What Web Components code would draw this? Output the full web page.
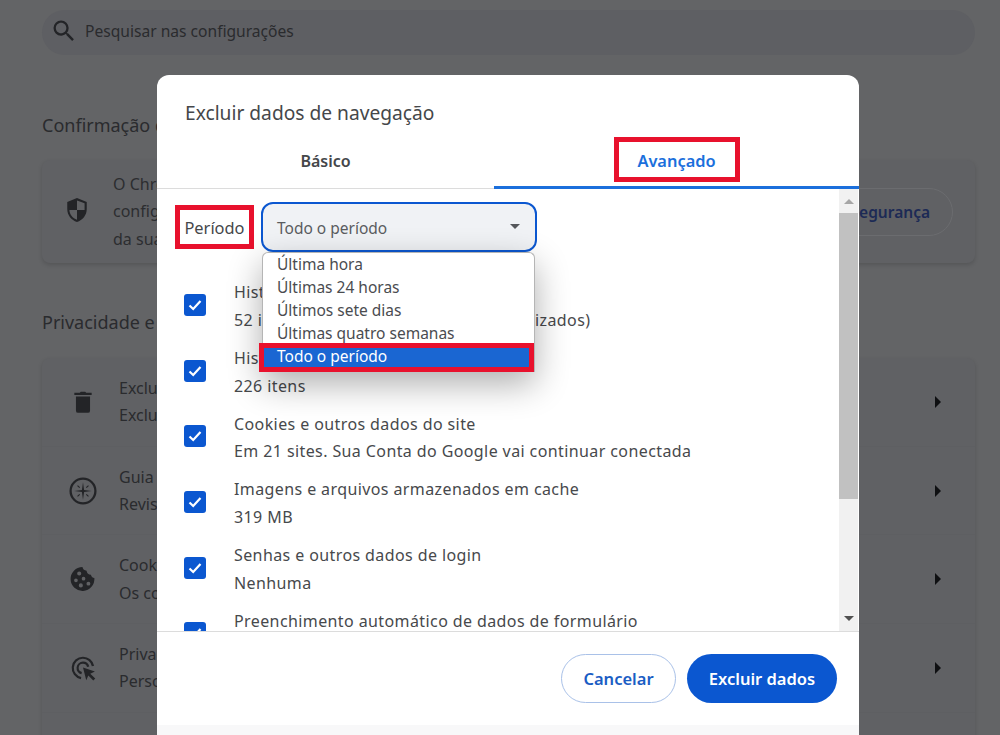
<!DOCTYPE html>
<html lang="pt-BR">
<head>
<meta charset="utf-8">
<title>Excluir dados de navegação</title>
<style>
  html, body { margin: 0; height: 100%; overflow: hidden; background: #636466; }
  body { font-family: "Noto Sans", "Open Sans", sans-serif; }
</style>
</head>
<body>
<settings-page>
  <search-bar>Pesquisar nas configurações</search-bar>

  <settings-section heading="Confirmação de segurança" gap="105" pad="23">
    <safety-card>
      <span>O Chrome</span><span>configurações</span><span>da sua</span>
    </safety-card>
  </settings-section>

  <settings-section heading="Privacidade e segurança" gap="95" pad="24">
    <settings-row icon="trash" title="Excluir dados" sub="Excluir histórico"></settings-row>
    <settings-row icon="compass" title="Guia de privacidade" sub="Revise os controles"></settings-row>
    <settings-row icon="cookie" title="Cookies de terceiros" sub="Os cookies"></settings-row>
    <settings-row icon="ads" title="Privacidade" sub="Personalize"></settings-row>
  </settings-section>
</settings-page>

<clear-dialog heading="Excluir dados de navegação">
  <period-select label="Período" value="Todo o período"></period-select>
  <data-row title="Histórico de navegação" sub="52 itens (nos seus dispositivos sincronizados)"></data-row>
  <data-row title="Histórico de downloads" sub="226 itens"></data-row>
  <data-row title="Cookies e outros dados do site" sub="Em 21 sites. Sua Conta do Google vai continuar conectada"></data-row>
  <data-row title="Imagens e arquivos armazenados em cache" sub="319 MB"></data-row>
  <data-row title="Senhas e outros dados de login" sub="Nenhuma"></data-row>
  <data-row title="Preenchimento automático de dados de formulário"></data-row>
</clear-dialog>

<script>
const ICONS = {
  trash: '<path d="M5.500 7h13v13a2 2 0 0 1-2 2h-9a2 2 0 0 1-2-2zM4 3.500h5L10 2.500h4l1 1h5V5.500H4z"/>',
  compass: '<path fill-rule="evenodd" d="M12 -.5a12.500 12.500 0 1 1 0 25a12.500 12.500 0 0 1 0-25zm0 2.100a10.400 10.400 0 1 0 0 20.800a10.400 10.400 0 0 0 0-20.800z"/><path d="M12 4l1 7 7 1-7 1-1 7-1-7-7-1 7-1z"/><path d="M7.300 6.600l2 2-.7.700-2-2zM16.700 6.600l.7.700-2 2-.7-.7zM7.300 17.400l-.7-.7 2-2 .7.700zM16.700 17.400l-2-2 .7-.7 2 2z"/>',
  cookie: '<path fill-rule="evenodd" d="M11.500 1c.4 2.300 1.800 3.300 3.800 3.300.3 2.300 1.800 3.700 4 3.700.4 1.800 1.400 2.800 3.200 3.100A11 11 0 1 1 11.500 1zM8.500 5a1.900 1.900 0 1 0 0 3.800a1.900 1.900 0 0 0 0-3.800zM5.500 11.500a1.700 1.700 0 1 0 0 3.400a1.700 1.700 0 0 0 0-3.400zm7-1.500a1.700 1.700 0 1 0 0 3.400a1.700 1.700 0 0 0 0-3.400zM10 16a1.900 1.900 0 1 0 0 3.800a1.900 1.900 0 0 0 0-3.800zm7-1.500a1.800 1.800 0 1 0 0 3.600a1.800 1.800 0 0 0 0-3.600z"/>',
  ads: '<path d="M12 1.500a10.500 10.500 0 0 1 10.300 8.500l-2.100.4A8.400 8.400 0 1 0 10.400 20.200l-.4 2.100A10.500 10.500 0 0 1 12 1.500z"/><path d="M12 6a6 6 0 0 1 5.800 4.500l-2.100.5A3.900 3.900 0 1 0 11 15.700l-.5 2.100A6 6 0 0 1 12 6z"/><path d="M12 11.500l11 3.800-4.300 1.900 4.600 4.600-1.800 1.800-4.600-4.600-1.900 4.300z"/>'
};

class SettingsPage extends HTMLElement {
  connectedCallback() {
    if (this.shadowRoot) return;
    this.attachShadow({ mode: 'open' });
    this.shadowRoot.innerHTML = `
      <style>
        :host {
          display: flex;
          flex-direction: column;
          height: 735px;
          box-sizing: border-box;
          padding: 10px 25px 0 42px;
          overflow: hidden;
          background: #636466;
          color: #26272a;
        }
      </style>
      <slot></slot>
    `;
  }
}

class SearchBar extends HTMLElement {
  connectedCallback() {
    if (this.shadowRoot) return;
    this.attachShadow({ mode: 'open' });
    this.shadowRoot.innerHTML = `
      <style>
        :host {
          display: flex;
          align-items: center;
          gap: 7px;
          height: 45px;
          flex: none;
          box-sizing: border-box;
          padding: 0 0 3px 8px;
          border-radius: 23px;
          background: #5e5f63;
          font-size: 15.600px;
          color: #2a2b2e;
        }
        svg { width: 28px; height: 28px; fill: #232427; }
      </style>
      <svg viewBox="0 0 24 24"><path d="M15.500 14h-.79l-.28-.27A6.471 6.471 0 0 0 16 9.500 6.500 6.500 0 1 0 9.500 16c1.610 0 3.090-.59 4.230-1.570l.27.28v.79l5 4.990L20.490 19l-4.990-5zm-6 0C7.010 14 5 11.990 5 9.500S7.010 5 9.500 5 14 7.010 14 9.500 11.990 14 9.500 14z"/></svg>
      <slot></slot>
    `;
  }
}

class SettingsSection extends HTMLElement {
  connectedCallback() {
    if (this.shadowRoot) return;
    this.attachShadow({ mode: 'open' });
    this.shadowRoot.innerHTML = `
      <style>
        :host { display: block; flex: none; }
        h2 {
          margin: 0;
          height: ${this.getAttribute('gap')}px;
          display: flex;
          align-items: flex-end;
          box-sizing: border-box;
          padding-bottom: ${this.getAttribute('pad')}px;
          font-size: 18px;
          font-weight: 400;
          color: #2a2b2e;
        }
        .card {
          border-radius: 8px;
          background: #606164;
          box-shadow: 0 2px 4px rgba(0,0,0,.15);
        }
        .card.rows { padding-bottom: 60px; }
      </style>
      <h2>${this.getAttribute('heading')}</h2>
      <div class="card"><slot></slot></div>
    `;
    if (this.querySelector('settings-row')) this.shadowRoot.querySelector('.card').classList.add('rows');
  }
}

class SafetyCard extends HTMLElement {
  connectedCallback() {
    if (this.shadowRoot) return;
    this.attachShadow({ mode: 'open' });
    this.shadowRoot.innerHTML = `
      <style>
        :host {
          display: flex;
          align-items: center;
          height: 103px;
          padding: 0 22px 0 22px;
          font-size: 16px;
          line-height: 27.500px;
          color: #2c2d30;
        }
        svg { width: 26px; height: 26px; fill: #232427; flex: none; margin-top: -3px; }
        .text { display: flex; flex-direction: column; margin-left: 23px; margin-top: 1px; }
        ::slotted(span) { display: block; }
        button {
          margin-left: auto;
          height: 48px;
          padding: 0 22px 0 24px;
          border: 1px solid #6b6c6f;
          border-radius: 24px;
          background: transparent;
          font: 600 15.500px "Noto Sans", sans-serif;
          color: #1c2a55;
        }
      </style>
      <svg viewBox="0 0 24 24"><path fill-rule="evenodd" d="M12 1l9 3.500v6.500c0 5.700-3.800 10.300-9 12-5.200-1.700-9-6.300-9-12V4.500zM12 3.200V12H5c.2 4.200 3 7.500 7 9V12h7V5.800z"/></svg>
      <div class="text"><slot></slot></div>
      <button>Segurança</button>
    `;
  }
}

class SettingsRow extends HTMLElement {
  connectedCallback() {
    if (this.shadowRoot) return;
    this.attachShadow({ mode: 'open' });
    this.shadowRoot.innerHTML = `
      <style>
        :host {
          display: flex;
          align-items: center;
          height: 88.700px;
          padding: 0 34px 0 28px;
          box-sizing: border-box;
          font-size: 16px;
          color: #2a2b2e;
          border-bottom: 1px solid #5e5f62;
        }
        svg.icon { width: 26px; height: 26px; fill: #232427; flex: none; overflow: visible; }
        .text { margin-left: 23px; padding-top: 1px; line-height: 27.500px; }
        .arrow { margin-left: auto; width: 0; height: 0; border-left: 6px solid #0f1012; border-top: 6px solid transparent; border-bottom: 6px solid transparent; }
      </style>
      <svg class="icon" viewBox="0 0 24 24">${ICONS[this.getAttribute('icon')]}</svg>
      <div class="text"><div>${this.getAttribute('title')}</div><div>${this.getAttribute('sub')}</div></div>
      <span class="arrow"></span>
    `;
  }
}

class ClearDialog extends HTMLElement {
  connectedCallback() {
    if (this.shadowRoot) return;
    this.attachShadow({ mode: 'open' });
    this.shadowRoot.innerHTML = `
      <style>
        :host {
          position: absolute;
          left: 157px;
          top: 75px;
          width: 702px;
          height: 660px;
          display: flex;
          flex-direction: column;
          border-radius: 12px 12px 0 0;
          background: #fff;
          color: #45474a;
          font-size: 16px;
        }
        h1 { margin: 0; padding: 25px 0 0 28px; height: 40px; font-size: 19.200px; font-weight: 400; line-height: 26px; color: #45474a; }
        .tabs { display: flex; height: 49px; flex: none; box-sizing: border-box; border-bottom: 1px solid #dcdcdc; }
        .tab {
          display: flex;
          align-items: center;
          justify-content: center;
          font-weight: 600;
          box-sizing: border-box;
        }
        .basic { width: 337px; color: #45474a; padding-bottom: 6px; font-size: 16px; }
        .advanced { flex: 1; color: #1b6fdc; border-bottom: 3px solid #1b6fdc; margin-bottom: -1px; font-size: 16.400px; }
        .advanced span { display: flex; align-items: center; justify-content: center; width: 126px; height: 45px; box-sizing: border-box; padding-top: 2px; border: 5px solid #e8112d; margin-top: -7px; }
        .middle { flex: none; height: 442px; display: flex; overflow: hidden; }
        .content { flex: 1; min-width: 0; padding-left: 18px; }
        .bar { width: 19px; flex: none; margin-right: 1px; background: #f1f1f1; display: flex; flex-direction: column; align-items: center; }
        .up, .down { width: 0; height: 0; border-left: 5px solid transparent; border-right: 5px solid transparent; }
        .up { margin-top: 10px; border-bottom: 5px solid #a6a6a6; }
        .thumb { width: 100%; height: 286px; background: #c1c1c1; margin-top: 9px; }
        .down { margin-top: auto; margin-bottom: 10px; border-top: 5px solid #505050; }
        footer {
          flex: none;
          display: flex;
          justify-content: flex-end;
          gap: 11px;
          height: 94px;
          box-sizing: border-box;
          padding: 22px 22px 0 0;
          border-top: 1px solid #dcdcdc;
        }
        button {
          height: 49px;
          border-radius: 25px;
          font: 600 16.500px "Noto Sans", sans-serif;
          box-sizing: border-box;
        }
        .cancel { width: 115px; background: #fff; border: 1px solid #a9c1e8; color: #1a5dc4; }
        .ok { width: 150px; background: #0b57d0; border: 0; color: #fff; }
        .strip { flex: 1; background: #f8f8f9; }
      </style>
      <h1>${this.getAttribute('heading')}</h1>
      <div class="tabs">
        <div class="tab basic">Básico</div>
        <div class="tab advanced"><span>Avançado</span></div>
      </div>
      <div class="middle">
        <div class="content"><slot></slot></div>
        <div class="bar"><i class="up"></i><i class="thumb"></i><i class="down"></i></div>
      </div>
      <footer>
        <button class="cancel">Cancelar</button>
        <button class="ok">Excluir dados</button>
      </footer>
      <div class="strip"></div>
    `;
  }
}

class PeriodSelect extends HTMLElement {
  connectedCallback() {
    if (this.shadowRoot) return;
    this.attachShadow({ mode: 'open' });
    const options = ['Última hora', 'Últimas 24 horas', 'Últimos sete dias', 'Últimas quatro semanas'];
    this.shadowRoot.innerHTML = `
      <style>
        :host {
          display: flex;
          gap: 7px;
          height: 83px;
          box-sizing: border-box;
          padding-top: 13px;
          align-items: flex-start;
          font-size: 15.500px;
        }
        .label {
          margin-top: 3px;
          width: 79px;
          height: 44px;
          box-sizing: border-box;
          border: 5px solid #e8112d;
          font-size: 16.400px;
          display: flex;
          align-items: center;
          justify-content: center;
        }
        .wrap { position: relative; width: 276px; }
        .box {
          height: 50px;
          box-sizing: border-box;
          border: 2px solid #0b57d0;
          border-radius: 12px;
          background: #f0f2f5;
          display: flex;
          align-items: center;
          padding: 1px 15px 0 14px;
          color: #5a5c60;
        }
        .caret { margin-left: auto; width: 0; height: 0; border-left: 5px solid transparent; border-right: 5px solid transparent; border-top: 5px solid #55575b; margin-top: -2px; }
        .menu {
          position: absolute;
          z-index: 2;
          left: 1px;
          top: 50px;
          width: 273px;
          box-sizing: border-box;
          border: 1px solid #b5b5b5;
          border-bottom: 0;
          border-radius: 6px 6px 0 0;
          background: #fff;
          color: #4a4c50;
          box-shadow: 0 12px 34px rgba(0,0,0,.32);
        }
        .opt { height: 23px; line-height: 23px; padding-left: 14px; white-space: nowrap; }
        .sel {
          margin: -2px 0 0 -4px;
          height: 29px;
          box-sizing: border-box;
          border: 5px solid #e8112d;
          background: #1a66d2;
          color: #fff;
          padding-left: 13px;
          line-height: 17px;
        }
      </style>
      <div class="label">${this.getAttribute('label')}</div>
      <div class="wrap">
        <div class="box">${this.getAttribute('value')}<span class="caret"></span></div>
        <div class="menu">
          ${options.map(o => `<div class="opt">${o}</div>`).join('')}
          <div class="opt sel">${this.getAttribute('value')}</div>
        </div>
      </div>
    `;
  }
}

class DataRow extends HTMLElement {
  connectedCallback() {
    if (this.shadowRoot) return;
    this.attachShadow({ mode: 'open' });
    const sub = this.getAttribute('sub');
    this.shadowRoot.innerHTML = `
      <style>
        :host {
          display: flex;
          align-items: center;
          height: 65.700px;
          padding-left: 9px;
          font-size: 16px;
          letter-spacing: .4px;
          color: #47494c;
        }
        .check {
          width: 22px;
          height: 22px;
          flex: none;
          border-radius: 3px;
          background: #0b57d0;
          display: flex;
          align-items: center;
          justify-content: center;
        }
        svg { width: 16px; height: 16px; fill: none; stroke: #fff; stroke-width: 2.200; }
        .text { margin-left: 28px; padding-top: 4px; line-height: 27.500px; white-space: nowrap; }
      </style>
      <span class="check"><svg viewBox="0 0 16 16"><path d="M2.500 8.500l3.700 3.500 7.300-8"/></svg></span>
      <div class="text"><div>${this.getAttribute('title')}</div>${sub ? `<div>${sub}</div>` : '<div>&nbsp;</div>'}</div>
    `;
  }
}

customElements.define('settings-page', SettingsPage);
customElements.define('search-bar', SearchBar);
customElements.define('settings-section', SettingsSection);
customElements.define('safety-card', SafetyCard);
customElements.define('settings-row', SettingsRow);
customElements.define('clear-dialog', ClearDialog);
customElements.define('period-select', PeriodSelect);
customElements.define('data-row', DataRow);
</script>
</body>
</html>
